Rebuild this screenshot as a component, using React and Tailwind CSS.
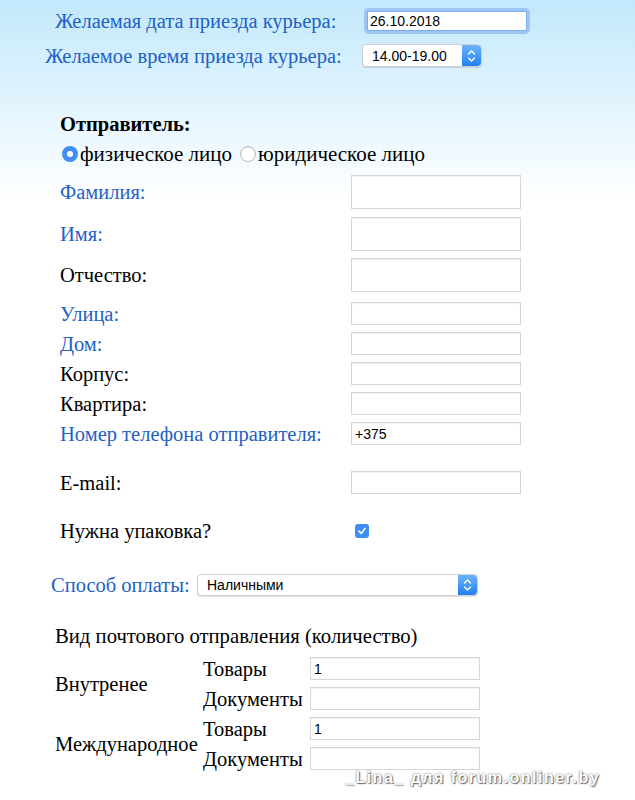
import React from 'react';

const serif = { fontFamily: '"Liberation Serif", "Times New Roman", serif' };

const Stepper = () => (
  <div className="w-[19px] self-stretch rounded-r-[4px] bg-gradient-to-b from-[#6ab4fb] to-[#1d7ff2] flex items-center justify-center">
    <svg width="9" height="14" viewBox="0 0 9 14" fill="none" stroke="white" strokeWidth="1.4" strokeLinecap="round" strokeLinejoin="round">
      <path d="M1.5 5 L4.5 2 L7.5 5" />
      <path d="M1.5 9 L4.5 12 L7.5 9" />
    </svg>
  </div>
);

const Select = ({ value, className }) => (
  <div className={`flex bg-white rounded-[4px] border border-[#d0d0d0] shadow-[0_1px_1px_rgba(0,0,0,0.12)] ${className}`}>
    <div className="flex-1 flex items-center pl-[9px] text-[14px] leading-[16px] text-black font-['Liberation_Sans',Arial,sans-serif]">{value}</div>
    <Stepper />
  </div>
);

const Field = ({ value, className = '' }) => (
  <div className={`bg-white border border-[#d6d6d6] shadow-[inset_0_1px_1px_rgba(0,0,0,0.06)] flex items-center pl-[3px] text-[14px] leading-[16px] text-black font-['Liberation_Sans',Arial,sans-serif] ${className}`}>
    {value}
  </div>
);

const Row = ({ label, blue, h, mt, value }) => (
  <div className={`flex items-center ${mt}`}>
    <div className={`w-[291px] text-[20.5px] leading-[22px] ${blue ? 'text-[#2161c5]' : 'text-black'}`}>{label}</div>
    <Field value={value} className={`w-[170px] ${h}`} />
  </div>
);

export default function App() {
  return (
    <div className="relative min-h-[800px] overflow-hidden bg-[linear-gradient(to_bottom,#c2e8fb_0px,#e4f5fe_110px,#ffffff_200px)]" style={serif}>
      {/* Courier date / time */}
      <div className="pt-[11px]">
        <div className="flex items-center h-[20px] pl-[55px]">
          <span className="w-[312px] text-[20.5px] leading-[22px] text-[#2161c5] whitespace-nowrap">Желаемая дата приезда курьера:</span>
          <div className="w-[160px] h-[20px] bg-white border border-[#7aaef0] ring-[3px] ring-[#9cc4f4] rounded-[2px] flex items-center pl-[2px] text-[14px] text-black font-['Liberation_Sans',Arial,sans-serif]">
            26.10.2018
          </div>
        </div>
        <div className="flex items-center mt-[13px] pl-[45px]">
          <span className="w-[317px] text-[20.5px] leading-[22px] text-[#2161c5] whitespace-nowrap">Желаемое время приезда курьера:</span>
          <Select value="14.00-19.00" className="w-[120px] h-[23px]" />
        </div>
      </div>

      {/* Sender */}
      <div className="pl-[60px]">
        <div className="mt-[46px] h-[22px] flex items-center text-[20.5px] font-bold text-black">Отправитель:</div>
        <div className="mt-[8px] h-[22px] flex items-center text-[21px] leading-[22px] text-black">
          <span className="ml-[2px] w-[16px] h-[16px] rounded-full bg-[#3f8ef5] flex items-center justify-center">
            <span className="w-[6px] h-[6px] rounded-full bg-white" />
          </span>
          <span className="ml-[2px]">физическое лицо</span>
          <span className="ml-[8px] w-[16px] h-[16px] rounded-full bg-white border border-[#b8b8b8] shadow-[inset_0_1px_1px_rgba(0,0,0,0.1)]" />
          <span className="ml-[2px]">юридическое лицо</span>
        </div>

        <Row label="Фамилия:" blue h="h-[34px]" mt="mt-[10px]" />
        <Row label="Имя:" blue h="h-[34px]" mt="mt-[8px]" />
        <Row label="Отчество:" h="h-[34px]" mt="mt-[7px]" />
        <Row label="Улица:" blue h="h-[23px]" mt="mt-[10px]" />
        <Row label="Дом:" blue h="h-[23px]" mt="mt-[7px]" />
        <Row label="Корпус:" h="h-[23px]" mt="mt-[7px]" />
        <Row label="Квартира:" h="h-[23px]" mt="mt-[7px]" />
        <Row label="Номер телефона отправителя:" blue h="h-[23px]" mt="mt-[7px]" value="+375" />
        <Row label="E-mail:" h="h-[23px]" mt="mt-[26px]" />

        <div className="mt-[26px] h-[22px] flex items-center">
          <div className="w-[291px] text-[20.5px] leading-[22px] text-black">Нужна упаковка?</div>
          <span className="ml-[4px] w-[14px] h-[14px] rounded-[3px] bg-[#3f8ef5] flex items-center justify-center">
            <svg width="10" height="10" viewBox="0 0 10 10" fill="none" stroke="white" strokeWidth="1.6" strokeLinecap="round" strokeLinejoin="round">
              <path d="M2 5.2 L4.2 7.5 L8 2.5" />
            </svg>
          </span>
        </div>
      </div>

      {/* Payment */}
      <div className="mt-[32px] pl-[51px] flex items-center">
        <span className="w-[146px] text-[20.5px] leading-[22px] text-[#2161c5] whitespace-nowrap">Способ оплаты:</span>
        <Select value="Наличными" className="w-[281px] h-[22px]" />
      </div>

      {/* Shipment type */}
      <div className="pl-[55px]">
        <div className="mt-[29px] h-[22px] flex items-center text-[20.7px] leading-[22px] text-black">Вид почтового отправления (количество)</div>
        <div className="mt-[10px] flex flex-col gap-[7px] text-[20.5px] leading-[22px] text-black">
          {[
            ['Внутренее', '1'],
            ['Международное', '1'],
          ].map(([group, goods]) => (
            <div key={group} className="flex items-center">
              <div className="w-[148px] whitespace-nowrap">{group}</div>
              <div className="flex flex-col gap-[7px]">
                <div className="flex items-center">
                  <span className="w-[107px]">Товары</span>
                  <Field value={goods} className="w-[170px] h-[23px]" />
                </div>
                <div className="flex items-center">
                  <span className="w-[107px]">Документы</span>
                  <Field className="w-[170px] h-[23px]" />
                </div>
              </div>
            </div>
          ))}
        </div>
      </div>

      {/* watermark */}
      <div className="absolute left-[345px] top-[766px] text-[16px] tracking-[1.5px] font-bold text-white font-['Liberation_Sans',Arial,sans-serif] [text-shadow:0_0_2px_#555,1px_1px_1px_#777]">
        _Lina_ для forum.onliner.by
      </div>
    </div>
  );
}
